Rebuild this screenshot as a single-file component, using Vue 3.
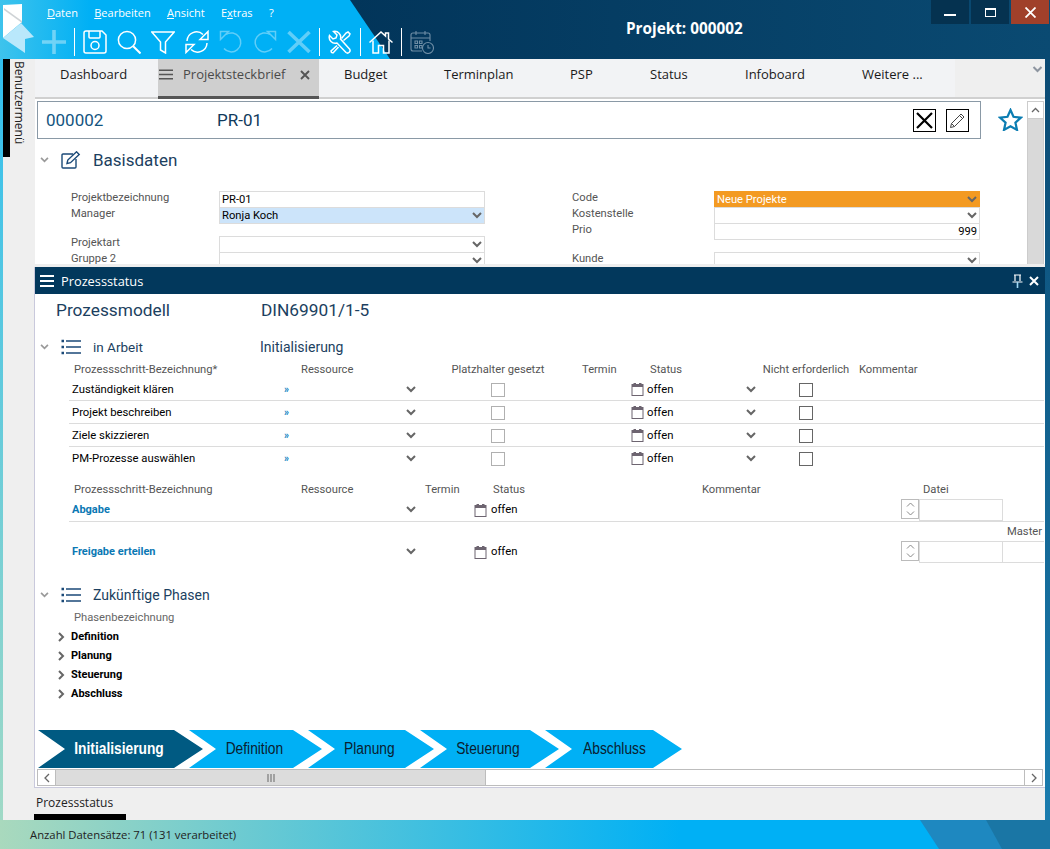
<template>
  <div class="app">
    <svg class="defs" width="0" height="0">
      <symbol id="i-chev" viewBox="0 0 10 7">
        <path d="M1 1l4 4 4-4" fill="none" stroke="currentColor" stroke-width="2" />
      </symbol>
      <symbol id="i-cal" viewBox="0 0 13 14">
        <rect x="1" y="2.500" width="11" height="11" fill="#fff" stroke="#6d6470" />
        <rect x="1" y="2.500" width="11" height="2.500" fill="#6d6470" />
        <rect x="2.500" y="1" width="2.500" height="2" fill="#6d6470" />
        <rect x="8" y="1" width="2.500" height="2" fill="#6d6470" />
      </symbol>
      <symbol id="i-list" viewBox="0 0 20 16">
        <path d="M0.500 2h2.500M0.500 8h2.500M0.500 14h2.500" stroke="#1b4a78" stroke-width="2.400" fill="none" />
        <path d="M5 2h15M5 8h15M5 14h15" stroke="#1b4a78" stroke-width="1.500" fill="none" />
      </symbol>
    </svg>

    <!-- Kopfzeile -->
    <header class="header">
      <svg class="header-bg" width="1050" height="59">
        <polygon points="350,0 1050,0 1050,59 390,59" fill="url(#hd)" />
        <defs>
          <linearGradient id="hd" x1="0" y1="0" x2="1" y2="0">
            <stop offset="0" stop-color="#02355a" />
            <stop offset="1" stop-color="#0a4a72" />
          </linearGradient>
        </defs>
      </svg>
      <svg class="logo" width="32" height="50" viewBox="0 0 32 50">
        <polygon points="0,1 19,0 19,18 0,34" fill="#fff" />
        <polygon points="1,4 19,17 19,19 1,6" fill="#cfd3d6" />
        <polygon points="18,19 31,33 22,35 22,49 0,34" fill="#b9e8fb" />
      </svg>
      <div class="header-left">
        <nav class="menu">
          <span v-for="m in menu" :key="m.after + m.key">{{ m.before }}<u>{{ m.key }}</u>{{ m.after }}</span>
          <span>?</span>
        </nav>
        <div class="toolbar">
          <svg class="tool faded" viewBox="0 0 24 24"><path d="M12 0v24M0 12h24" stroke-width="3.600" /></svg>
          <i class="sep"></i>
          <svg class="tool" viewBox="0 0 24 24">
            <path d="M1 3a2 2 0 0 1 2-2h16l4 4v16a2 2 0 0 1-2 2H3a2 2 0 0 1-2-2z" />
            <path d="M6 1v6a1 1 0 0 0 1 1h9a1 1 0 0 0 1-1V1" />
            <circle cx="12" cy="15.500" r="4" />
          </svg>
          <svg class="tool" viewBox="0 0 24 24">
            <circle cx="10" cy="10" r="8.600" />
            <path d="M16.200 16.200L23.500 23.500" stroke-width="2" />
          </svg>
          <svg class="tool" viewBox="0 0 24 24"><path d="M0.800 2h22.400l-8.700 10v11l-5-3v-8z" /></svg>
          <svg class="tool" viewBox="0 0 24 24">
            <path d="M2 11a9.500 9.500 0 0 1 16-6.500M22 13a9.500 9.500 0 0 1-16 6.500" />
            <path d="M23 1.500v8h-8zM1 22.500v-8h8z" />
          </svg>
          <svg class="tool faded" viewBox="0 0 24 24">
            <path d="M7 4.500a9.500 9.500 0 1 1-2 14" />
            <path d="M1.500 1.500h8l-8 8z" />
          </svg>
          <svg class="tool faded" viewBox="0 0 24 24">
            <path d="M17 4.500a9.500 9.500 0 1 0 2 14" />
            <path d="M22.500 1.500h-8l8 8z" />
          </svg>
          <svg class="tool faded" viewBox="0 0 24 24"><path d="M1.500 2l21 20M22.500 2l-21 20" stroke-width="3.600" /></svg>
          <i class="sep"></i>
          <svg class="tool" viewBox="0 0 24 24">
            <path d="M1.500 5.500L5 9l3-1 1-3-3.500-3.500a6 6 0 0 1 7 7.500L21.500 19a2.500 2.500 0 0 1-3.500 3.500L9 13a6 6 0 0 1-7.500-7.500z" />
            <path d="M13.500 8.500L18 3l2-1 2 2-1 2-5.500 4.500M9 15.500l-6 5.500 0.500 1.500 1.500 0.500 5.500-6" />
          </svg>
          <i class="sep"></i>
          <svg class="tool" viewBox="0 0 24 24">
            <path d="M0.500 12.500L12 2l4.500 4V3h3v6l4 3.500" />
            <path d="M4 10.500V23h5.500v-7.500h5V23H20V10.500" />
          </svg>
          <i class="sep"></i>
          <svg class="tool cal" viewBox="0 0 24 24">
            <path d="M12 21H3a2 2 0 0 1-2-2V5a2 2 0 0 1 2-2h15a2 2 0 0 1 2 2v6M1 8h19M6 1v4M15 1v4" />
            <path d="M5 11h2.500v2.500H5zM9.500 11H12v2.500H9.500zM5 15.500h2.500V18H5zM9.500 15.500H12V18H9.500z" />
            <circle cx="18" cy="18" r="5.500" />
            <path d="M18 15v3h2.500" />
          </svg>
        </div>
      </div>
      <div class="title">Projekt: 000002</div>
      <div class="win">
        <div class="win-btn"><i class="win-min"></i></div>
        <div class="win-btn"><i class="win-max"></i></div>
        <div class="win-btn win-close">
          <svg width="11" height="11" viewBox="0 0 11 11"><path d="M0.500 0.500l10 10M10.500 0.500l-10 10" stroke="#fff" stroke-width="1.800" /></svg>
        </div>
      </div>
    </header>

    <div class="middle">
      <div class="strip-left"></div>
      <aside class="sidebar">
        <div class="side-bar"></div>
        <div class="side-text">Benutzermenü</div>
      </aside>

      <main class="main">
        <div class="tabs">
          <div class="tab">Dashboard</div>
          <div class="tab tab-active">
            <svg width="14" height="11" viewBox="0 0 14 11"><path d="M0 1.200h14M0 5.500h14M0 9.800h14" stroke="#555" stroke-width="1.600" /></svg>
            <span>Projektsteckbrief</span>
            <svg width="10" height="10" viewBox="0 0 10 10"><path d="M1 1l8 8M9 1l-8 8" stroke="#555" stroke-width="1.900" /></svg>
          </div>
          <div class="tab">Budget</div>
          <div class="tab">Terminplan</div>
          <div class="tab">PSP</div>
          <div class="tab">Status</div>
          <div class="tab">Infoboard</div>
          <div class="tab">Weitere ...</div>
          <div class="tabs-rest">
            <svg class="chev tabs-chev"><use href="#i-chev" /></svg>
          </div>
        </div>

        <!-- Projektsteckbrief -->
        <section class="upper">
          <div class="upper-main">
            <div class="idbox">
              <span class="id-nr">000002</span>
              <span class="id-name">PR-01</span>
              <button class="sq">
                <svg width="17" height="17" viewBox="0 0 17 17"><path d="M1 1l15 15M16 1L1 16" stroke="#000" stroke-width="2.200" /></svg>
              </button>
              <button class="sq">
                <svg width="17" height="17" viewBox="0 0 17 17" fill="none" stroke="#444"><path d="M1.500 15.500l1-4L12 2l3 3-9.500 9.500zM2.500 11.500l3 3M10.500 3.500l3 3" /></svg>
              </button>
            </div>
            <div class="sec-head basis">
              <svg class="chev sec-chev"><use href="#i-chev" /></svg>
              <svg class="sec-icon" viewBox="0 0 20 18" fill="none" stroke="#1b4a78" stroke-width="1.400">
                <path d="M12 3H2a1 1 0 0 0-1 1v12a1 1 0 0 0 1 1h12a1 1 0 0 0 1-1V8" />
                <path d="M6 12.500l0.800-3.500L15.500 0.800l2.700 2.700L9.500 11.700z" />
              </svg>
              <span>Basisdaten</span>
            </div>
            <div class="form">
              <div class="form-col">
                <div class="field">
                  <label>Projektbezeichnung</label>
                  <div class="inp">PR-01</div>
                </div>
                <div class="field">
                  <label>Manager</label>
                  <div class="inp inp-blue">Ronja Koch<svg class="chev"><use href="#i-chev" /></svg></div>
                </div>
                <div class="field field-gap">
                  <label>Projektart</label>
                  <div class="inp inp-end"><svg class="chev"><use href="#i-chev" /></svg></div>
                </div>
                <div class="field">
                  <label>Gruppe 2</label>
                  <div class="inp inp-end"><svg class="chev"><use href="#i-chev" /></svg></div>
                </div>
              </div>
              <div class="form-col form-right">
                <div class="field">
                  <label>Code</label>
                  <div class="inp inp-orange">Neue Projekte<svg class="chev"><use href="#i-chev" /></svg></div>
                </div>
                <div class="field">
                  <label>Kostenstelle</label>
                  <div class="inp inp-end"><svg class="chev"><use href="#i-chev" /></svg></div>
                </div>
                <div class="field">
                  <label>Prio</label>
                  <div class="inp inp-end">999</div>
                </div>
                <div class="field field-gap">
                  <label>Kunde</label>
                  <div class="inp inp-end"><svg class="chev"><use href="#i-chev" /></svg></div>
                </div>
              </div>
            </div>
          </div>
          <div class="star-col">
            <svg width="25" height="23" viewBox="0 0 25 23"><path d="M12.500 2l3 6.800 7.500 0.800-5.600 5 1.600 7.300-6.500-3.700-6.500 3.700 1.600-7.300-5.600-5 7.500-0.800z" fill="none" stroke="#0b7db2" stroke-width="2.200" /></svg>
          </div>
          <div class="vscroll">
            <div class="vscroll-btn">
              <svg width="9" height="6" viewBox="0 0 9 6"><path d="M1 5l3.500-3.500L8 5" fill="none" stroke="#666" stroke-width="1.300" /></svg>
            </div>
            <div class="vscroll-thumb"></div>
          </div>
        </section>

        <div class="splitter"></div>

        <!-- Prozessstatus -->
        <section class="panel">
          <div class="panel-head">
            <svg width="14" height="12" viewBox="0 0 14 12"><path d="M0 1h14M0 6h14M0 11h14" stroke="#fff" stroke-width="1.800" /></svg>
            <span class="panel-title">Prozessstatus</span>
            <svg class="pin" width="11" height="14" viewBox="0 0 11 14" fill="none" stroke="#fff" stroke-width="1.200">
              <path d="M2 1h7M3 1v6M8 1v6M0.500 8h10" /><path d="M5.500 8v6" stroke="#9fd8f5" stroke-width="1.600" />
            </svg>
            <svg width="10" height="10" viewBox="0 0 10 10"><path d="M1 1l8 8M9 1l-8 8" stroke="#fff" stroke-width="2" /></svg>
          </div>

          <div class="panel-body">
            <div class="model">
              <span class="model-label">Prozessmodell</span>
              <span class="model-value">DIN69901/1-5</span>
            </div>

            <div class="sec-head arbeit">
              <svg class="chev sec-chev"><use href="#i-chev" /></svg>
              <svg class="sec-icon list"><use href="#i-list" /></svg>
              <span class="sec-small">in Arbeit</span>
              <span class="sec-phase">Initialisierung</span>
            </div>

            <div class="steps">
              <div class="step-head">
                <span class="indent">Prozessschritt-Bezeichnung*</span>
                <span class="indent-res">Ressource</span>
                <span class="center">Platzhalter gesetzt</span>
                <span class="indent-t">Termin</span>
                <span class="indent-s">Status</span>
                <span class="center">Nicht erforderlich</span>
                <span class="indent-k">Kommentar</span>
              </div>
              <div v-for="s in steps" :key="s" class="step">
                <span class="step-name">{{ s }}</span>
                <span class="res"><b class="more">»</b><svg class="chev"><use href="#i-chev" /></svg></span>
                <span class="center"><i class="check check-off"></i></span>
                <span></span>
                <span class="status">
                  <svg class="calico"><use href="#i-cal" /></svg>offen<svg class="chev"><use href="#i-chev" /></svg>
                </span>
                <span class="center"><i class="check"></i></span>
                <span></span>
              </div>
            </div>

            <div class="steps2">
              <div class="step2-head">
                <span class="indent">Prozessschritt-Bezeichnung</span>
                <span class="indent-res">Ressource</span>
                <span class="indent-t2">Termin</span>
                <span class="indent-s2">Status</span>
                <span>Kommentar</span>
                <span class="indent-d">Datei</span>
              </div>
              <div class="step2 step2-line">
                <a class="step-link">Abgabe</a>
                <span class="res res2"><svg class="chev"><use href="#i-chev" /></svg></span>
                <span></span>
                <span class="status2"><svg class="calico"><use href="#i-cal" /></svg>offen</span>
                <span></span>
                <span class="file">
                  <span class="spin">
                    <svg width="9" height="5" viewBox="0 0 9 5"><path d="M1 4.500L4.500 1 8 4.500" fill="none" stroke="#888" /></svg>
                    <svg width="9" height="5" viewBox="0 0 9 5"><path d="M1 0.500L4.500 4 8 0.500" fill="none" stroke="#888" /></svg>
                  </span>
                  <i class="file-inp"></i>
                </span>
              </div>
              <div class="master-row">Master</div>
              <div class="step2">
                <a class="step-link">Freigabe erteilen</a>
                <span class="res res2"><svg class="chev"><use href="#i-chev" /></svg></span>
                <span></span>
                <span class="status2"><svg class="calico"><use href="#i-cal" /></svg>offen</span>
                <span></span>
                <span class="file">
                  <span class="spin">
                    <svg width="9" height="5" viewBox="0 0 9 5"><path d="M1 4.500L4.500 1 8 4.500" fill="none" stroke="#888" /></svg>
                    <svg width="9" height="5" viewBox="0 0 9 5"><path d="M1 0.500L4.500 4 8 0.500" fill="none" stroke="#888" /></svg>
                  </span>
                  <i class="file-inp"></i>
                  <i class="file-inp file-inp2"></i>
                </span>
              </div>
            </div>

            <div class="sec-head zukunft">
              <svg class="chev sec-chev"><use href="#i-chev" /></svg>
              <svg class="sec-icon list"><use href="#i-list" /></svg>
              <span class="sec-mid">Zukünftige Phasen</span>
            </div>
            <div class="phase-label">Phasenbezeichnung</div>
            <div class="phases">
              <div v-for="p in phases" :key="p" class="phase">
                <svg width="7" height="10" viewBox="0 0 7 10"><path d="M1 1l4 4-4 4" fill="none" stroke="#666" stroke-width="2" /></svg>
                {{ p }}
              </div>
            </div>
          </div>

          <div class="arrows">
            <div v-for="(a, i) in arrows" :key="a.name" class="arrow" :class="{ 'arrow-on': i === 0 }" :style="{ width: a.width + 'px' }">
              <span class="arrow-text">{{ a.name }}</span>
            </div>
          </div>

          <div class="hscroll">
            <div class="hs-btn">
              <svg width="6" height="10" viewBox="0 0 6 10"><path d="M5 1L1 5l4 4" fill="none" stroke="#666" stroke-width="1.300" /></svg>
            </div>
            <div class="hs-thumb">
              <svg width="8" height="8" viewBox="0 0 8 8"><path d="M1 0v8M4 0v8M7 0v8" stroke="#666" /></svg>
            </div>
            <div class="hs-rest"></div>
            <div class="hs-btn hs-btn-r">
              <svg width="6" height="10" viewBox="0 0 6 10"><path d="M1 1l4 4-4 4" fill="none" stroke="#666" stroke-width="1.300" /></svg>
            </div>
          </div>
        </section>

        <div class="bottom-tabs">
          <span class="bottom-text">Prozessstatus</span>
          <i class="bottom-mark"></i>
        </div>
      </main>

      <div class="strip-right"></div>
    </div>

    <footer class="statusbar">
      <span>Anzahl Datensätze: 71 (131 verarbeitet)</span>
      <svg class="status-deco" width="130" height="29">
        <polygon points="0,0 130,0 130,29 19,29" fill="#1e88c0" />
        <polygon points="66,0 130,0 130,29 82,29" fill="#1a76a5" />
      </svg>
    </footer>
  </div>
</template>

<script setup>
const menu = [
  { before: '', key: 'D', after: 'aten' },
  { before: '', key: 'B', after: 'earbeiten' },
  { before: '', key: 'A', after: 'nsicht' },
  { before: 'E', key: 'x', after: 'tras' }
]
const steps = ['Zuständigkeit klären', 'Projekt beschreiben', 'Ziele skizzieren', 'PM-Prozesse auswählen']
const phases = ['Definition', 'Planung', 'Steuerung', 'Abschluss']
const arrows = [
  { name: 'Initialisierung', width: 165 },
  { name: 'Definition', width: 133 },
  { name: 'Planung', width: 126 },
  { name: 'Steuerung', width: 139 },
  { name: 'Abschluss', width: 137 }
]
</script>

<style>
html, body { margin: 0; background: #efefef; }
</style>

<style scoped>
.app {
  width: 1050px;
  height: 849px;
  display: flex;
  flex-direction: column;
  overflow: hidden;
  font-family: Roboto, "Liberation Sans", sans-serif;
  font-size: 11.2px;
  color: #000;
}
.defs { position: absolute; }

.chev { width: 10px; height: 7px; color: #666; flex: none; }

/* Kopfzeile */
.header {
  height: 59px;
  flex: none;
  position: relative;
  display: flex;
  background: linear-gradient(90deg, #3ec3ec, #00b0f5 90px);
  color: #fff;
}
.header-bg { position: absolute; left: 0; top: 0; }
.logo { position: relative; flex: none; margin: 4px 0 0 3px; }
.header-left { position: relative; margin-left: 7px; width: 400px; }
.menu {
  display: flex;
  height: 25px;
  align-items: center;
  padding-left: 5px;
  gap: 16.300px;
  font-family: "Open Sans", sans-serif;
  font-size: 11px;
  color: #fff;
}
.toolbar { display: flex; align-items: center; gap: 10px; margin-top: 3px; height: 28px; }
.tool {
  width: 24px;
  height: 24px;
  flex: none;
  fill: none;
  stroke: #fff;
  stroke-width: 1.500;
}
.faded { opacity: .38; }
.cal { stroke: #6f8ea6; stroke-width: 1.100; }
.sep { width: 1px; height: 28px; background: #fff; flex: none; margin: 0 -2px; }
.title {
  position: absolute;
  left: 626px;
  top: 18px;
  font-family: "Open Sans", sans-serif;
  font-size: 15.300px;
  font-weight: 700;
  color: #fff;
}
.win { position: absolute; right: 1px; top: 0; display: flex; gap: 2px; }
.win-btn {
  width: 38px;
  height: 24px;
  background: #053250;
  display: flex;
  align-items: center;
  justify-content: center;
}
.win-close { background: #a0402a; }
.win-min { width: 12px; height: 2px; background: #fff; margin-top: 5px; }
.win-max { width: 9px; height: 6px; border: 1.500px solid #fff; border-top-width: 2px; }

/* Mittelteil */
.middle { flex: 1; display: flex; min-height: 0; }
.strip-left { width: 3px; background: linear-gradient(180deg, #32bfee, #a0d9c6); }
.strip-right { width: 5px; background: linear-gradient(180deg, #0b4a73, #1a7cae); }
.sidebar { width: 32px; background: #efefef; display: flex; align-items: flex-start; }
.side-bar { width: 7px; height: 98px; background: #000; }
.side-text {
  writing-mode: vertical-rl;
  margin: 2px 0 0 3px;
  font-family: "Open Sans", sans-serif;
  font-size: 12px;
  line-height: 12px;
  color: #222;
}
.main { width: 1010px; display: flex; flex-direction: column; background: #efefef; }

.tabs {
  height: 38px;
  flex: none;
  display: grid;
  grid-template-columns: 123px 161px 100px 126px 80px 95px 117px 118px 1fr;
  background: #f2f3f5;
  border-bottom: 2px solid #d0d0d0;
  font-family: "Open Sans", sans-serif;
  font-size: 13px;
  color: #1a1a1a;
}
.tab { padding-left: 25px; line-height: 31px; white-space: nowrap; }
.tab-active {
  padding-left: 1px;
  display: flex;
  align-items: flex-start;
  background: #cfcfcf;
  color: #4a4a4a;
  border-bottom: 3px solid #555;
  margin-bottom: -2px;
}
.tab-active svg:first-child { margin-top: 10px; }
.tab-active span { margin-left: 10px; width: 117px; }
.tab-active svg:last-child { margin-top: 11px; }
.tabs-rest { background: #efefef; position: relative; }
.tabs-chev { position: absolute; right: 2px; top: 7px; width: 11px; color: #8d95a0; }

.upper {
  height: 165px;
  flex: none;
  display: flex;
  background: #fff;
  overflow: hidden;
}
.upper-main { width: 955px; flex: none; }
.idbox {
  margin: 2px 0 0 2px;
  height: 36px;
  width: 931px;
  border: 1px solid #8a99a6;
  display: flex;
  align-items: center;
  gap: 10px;
  padding-right: 11px;
  box-sizing: content-box;
  font-size: 17px;
}
.id-nr { margin-left: 8px; width: 161px; color: #14557f; }
.id-name { color: #103a5c; margin-right: auto; }
.sq {
  width: 23px;
  height: 23px;
  padding: 0;
  border: 1px solid #000;
  background: #fff;
  display: flex;
  align-items: center;
  justify-content: center;
  box-sizing: border-box;
}

.sec-head { display: flex; align-items: center; color: #1c3f60; }
.sec-chev { margin-left: 5px; color: #9a9a9a; width: 9px; height: 6px; }
.sec-icon { width: 20px; height: 18px; margin-left: 12px; flex: none; }
.sec-icon.list { height: 16px; }
.basis { height: 20px; margin-top: 11px; font-size: 17px; }
.basis span { margin-left: 12px; }

.form { display: flex; margin: 21px 0 0 36px; }
.form-col { width: 414px; margin-right: 87px; flex: none; }
.form-right { margin-right: 0; }
.field { display: flex; height: 16px; }
.field-gap { margin-top: 13px; }
.field label { width: 148px; flex: none; color: #555; line-height: 13px; }
.form-right .field label { width: 142px; }
.inp {
  width: 266px;
  height: 17px;
  flex: none;
  box-sizing: border-box;
  border: 1px solid #dcdcdc;
  background: #fff;
  padding: 0 2px;
  line-height: 15px;
  display: flex;
  justify-content: space-between;
  align-items: center;
}
.inp-blue { background: #cce4fa; }
.inp-orange { background: #f39a22; border-color: #f39a22; color: #fff; }
.inp-end { justify-content: flex-end; }

.star-col {
  width: 34px;
  flex: none;
  margin-left: 3px;
  display: flex;
  justify-content: center;
  align-items: flex-start;
  padding-top: 9px;
  box-sizing: border-box;
}
.vscroll { width: 17px; flex: none; margin-top: 2px; border: 1px solid #ccc; border-bottom: 0; box-sizing: border-box; }
.vscroll-btn { height: 16px; display: flex; align-items: center; justify-content: center; }
.vscroll-thumb { height: 200px; background: #d9d9d9; border-top: 1px solid #ccc; }

.splitter { height: 3px; flex: none; background: #eee; }

.panel {
  flex: none;
  height: 521px;
  display: flex;
  flex-direction: column;
  background: #fff;
  border-left: 1px solid #c9c9dc;
  border-bottom: 1px solid #c9c9dc;
  box-sizing: border-box;
  margin-left: -1px;
}
.panel-head {
  height: 27px;
  flex: none;
  background: #02385c;
  display: flex;
  align-items: center;
  padding: 0 6px 0 5px;
  color: #fff;
}
.panel-title { margin-left: 7px; margin-right: auto; font-family: "Open Sans", sans-serif; font-size: 12.800px; }
.pin { margin-right: 6px; }

.panel-body { flex: 1; min-height: 0; overflow: hidden; position: relative; }
.model { display: flex; height: 20px; margin-top: 6px; align-items: center; color: #1c3f60; font-size: 17.300px; }
.model-label { margin-left: 21px; width: 205px; }
.arbeit { height: 18px; margin-top: 18px; }
.arbeit .sec-small { margin-left: 12px; width: 167px; font-size: 13.500px; }
.sec-phase { font-size: 14px; }

.steps { margin-top: 5px; color: #000; }
.step-head, .step {
  display: grid;
  grid-template-columns: 214px 137px 156px 54px 130px 92px 1fr;
  margin-left: 34px;
  margin-right: 1px;
}
.step-head { height: 17px; line-height: 18px; color: #555; white-space: nowrap; }
.indent { padding-left: 5px; }
.indent-res { padding-left: 18px; }
.indent-t { padding-left: 6px; }
.indent-s { padding-left: 20px; }
.indent-k { padding-left: 7px; }
.center { display: flex; justify-content: center; align-items: center; }
.step { height: 23px; align-items: center; border-bottom: 1px solid #dcdcdc; box-sizing: border-box; font-size: 11.300px; }
.step:last-child { border-bottom-color: transparent; }
.step-name { padding-left: 3px; }
.res { display: flex; justify-content: space-between; align-items: center; padding-right: 4px; }
.res2 { justify-content: flex-end; }
.more { color: #0a80c0; font-weight: 700; font-size: 10px; padding-left: 1px; }
.check { width: 12px; height: 12px; margin-top: 2px; border: 1px solid #666; box-sizing: content-box; display: block; }
.check-off { border-color: #b0b0b0; }
.calico { width: 13px; height: 14px; margin-right: 3px; flex: none; }
.status { display: flex; align-items: center; padding-left: 1px; }
.status .chev { margin-left: auto; margin-right: 4px; }

.steps2 { margin-top: 11px; }
.step2-head, .step2 {
  display: grid;
  grid-template-columns: 214px 137px 50px 232px 199px 1fr;
  margin-left: 34px;
  margin-right: 1px;
}
.step2-head { height: 16px; line-height: 18px; color: #555; white-space: nowrap; }
.indent-t2 { padding-left: 5px; }
.indent-s2 { padding-left: 23px; }
.indent-d { padding-left: 22px; }
.step2 { height: 23px; align-items: center; margin-top: 1px; font-size: 11.300px; }
.step2-line { border-bottom: 1px solid #dcdcdc; height: 24px; box-sizing: border-box; }
.step-link { color: #0a78b4; font-weight: 700; padding-left: 3px; font-size: 11px; }
.status2 { display: flex; align-items: center; padding-left: 4px; }
.status2 .calico { margin-right: 4px; }
.file { display: flex; align-self: start; overflow: hidden; margin-top: 1px; }
.spin {
  width: 18px;
  height: 20px;
  box-sizing: border-box;
  border: 1px solid #bbb;
  display: flex;
  flex-direction: column;
  align-items: center;
  justify-content: space-around;
  flex: none;
}
.file-inp { width: 84px; height: 22px; box-sizing: border-box; border: 1px solid #dcdcdc; flex: none; }
.file-inp2 { width: 60px; border-left: 0; }
.master-row {
  height: 17px;
  line-height: 20px;
  margin-left: 972px;
  margin-right: 1px;
  color: #555;
  white-space: nowrap;
}

.zukunft { height: 20px; margin-top: 22px; }
.sec-mid { margin-left: 12px; font-size: 14px; }
.phase-label { margin: 5px 0 0 39px; height: 16px; line-height: 16px; color: #666; }
.phases { margin-top: 1px; }
.phase {
  height: 19px;
  display: flex;
  align-items: center;
  gap: 6px;
  padding-left: 23px;
  font-weight: 700;
  font-size: 11px;
}

.arrows { display: flex; height: 38px; margin: 0 0 1px 3px; flex: none; }
.arrow {
  height: 38px;
  flex: none;
  box-sizing: border-box;
  margin-left: -14px;
  padding: 0 30px 0 27px;
  display: flex;
  align-items: center;
  justify-content: center;
  background: #00b0f5;
  clip-path: polygon(0 0, calc(100% - 29px) 0, 100% 50%, calc(100% - 29px) 100%, 0 100%, 27px 50%);
  font-family: "Liberation Sans", sans-serif;
  font-size: 16px;
  color: #0a2030;
}
.arrow:first-child { margin-left: 0; }
.arrow:last-child { padding-left: 31px; }
.arrow-on { background: #005a82; color: #fff; font-weight: 700; }
.arrow-text { display: block; transform: scaleX(.86); white-space: nowrap; }

.hscroll {
  height: 17px;
  flex: none;
  margin: 0 2px 1px 2px;
  display: flex;
  box-sizing: border-box;
  border: 1px solid #bdbdbd;
}
.hs-btn { width: 17px; display: flex; align-items: center; justify-content: center; flex: none; }
.hs-thumb {
  width: 431px;
  flex: none;
  background: #dcdcdc;
  border: solid #bdbdbd;
  border-width: 0 1px;
  box-sizing: border-box;
  display: flex;
  align-items: center;
  justify-content: center;
}
.hs-rest { flex: 1; }
.hs-btn-r { border-left: 1px solid #bdbdbd; }

.bottom-tabs { flex: 1; position: relative; padding-left: 1px; }
.bottom-text { display: block; margin-top: 6px; font-family: "Open Sans", sans-serif; font-size: 12px; color: #222; }
.bottom-mark { position: absolute; left: -1px; bottom: 0; width: 92px; height: 6px; background: #000; }

.statusbar {
  height: 29px;
  flex: none;
  position: relative;
  display: flex;
  align-items: center;
  padding-left: 30px;
  background: linear-gradient(90deg, #a9d9bd, #00b0f5 680px);
  font-family: "Open Sans", sans-serif;
  font-size: 11.300px;
  color: #222;
}
.status-deco { position: absolute; right: 0; top: 0; }
</style>
